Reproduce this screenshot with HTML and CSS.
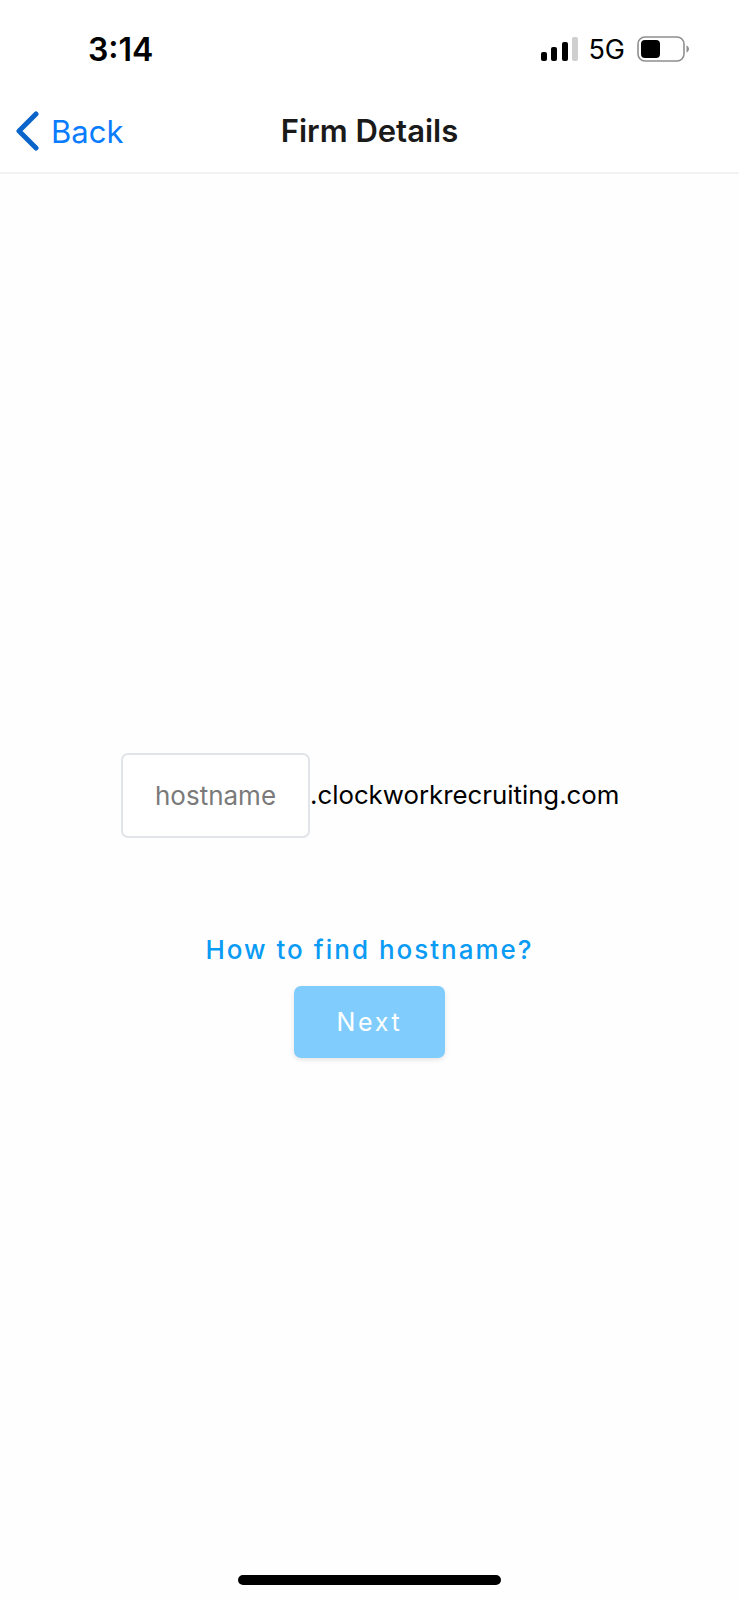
FILE: index.html
```html
<!DOCTYPE html>
<html lang="en">
<head>
    <meta charset="UTF-8">
    <meta name="viewport" content="width=device-width, initial-scale=1.0">
    <title>Firm Details</title>
    <link rel="stylesheet" href="styles.css">
</head>
<body>
    <div class="status-bar">
        <span class="clock">3:14</span>
        <div class="status-icons">
            <svg class="signal" width="37" height="24" viewBox="0 0 37 24">
                <rect x="0" y="15" width="6" height="9" rx="2" fill="#000"/>
                <rect x="10" y="10" width="6" height="14" rx="2" fill="#000"/>
                <rect x="21" y="5" width="6" height="19" rx="2" fill="#000"/>
                <rect x="31" y="0" width="6" height="24" rx="2" fill="#cfcfcf"/>
            </svg>
            <span class="network">5G</span>
            <svg class="battery" width="52" height="26" viewBox="0 0 52 26">
                <rect x="1" y="1" width="46" height="24" rx="7" fill="none" stroke="#8e8e8e" stroke-width="1.6"/>
                <rect x="4" y="4" width="19" height="18" rx="4" fill="#000"/>
                <path d="M49.5 9.5c1.5 .6 2.5 2 2.5 3.500s-1 2.900-2.500 3.500z" fill="#8e8e8e"/>
            </svg>
        </div>
    </div>

    <div class="nav-bar">
        <a class="back" href="#">
            <svg width="24" height="40" viewBox="0 0 24 40">
                <path d="M21 3 L4 20 L21 37" fill="none" stroke="#0a64c9" stroke-width="5" stroke-linecap="round" stroke-linejoin="round"/>
            </svg>
            <span>Back</span>
        </a>
        <h1>Firm Details</h1>
    </div>

    <div class="content">
        <div class="host-row">
            <input class="host-input" type="text" placeholder="hostname">
            <span class="domain">.clockworkrecruiting.com</span>
        </div>
        <a class="help-link" href="#">How to find hostname?</a>
        <button class="next-btn">Next</button>
    </div>

    <div class="home-bar"></div>
</body>
</html>
```

FILE: styles.css
```css
* {
    box-sizing: border-box;
}

body {
    font-family: Inter, "Liberation Sans", sans-serif;
    background-color: #fefefe;
    color: #000;
    margin: 0;
    height: 1600px;
    display: flex;
    flex-direction: column;
    overflow: hidden;
}

.status-bar {
    background-color: #fff;
    height: 92px;
    padding: 6px 50px 0 88px;
    display: flex;
    align-items: center;
    justify-content: space-between;
}

.clock {
    font-size: 32px;
    font-weight: 600;
}

.status-icons {
    display: flex;
    align-items: center;
    gap: 11px;
}

.signal {
    margin-right: -1px;
}

.network {
    font-size: 27px;
}

.battery {
    margin-left: 1px;
}

.nav-bar {
    background-color: #fff;
    height: 82px;
    border-bottom: 2px solid #f2f2f2;
    position: relative;
    display: flex;
    align-items: center;
    justify-content: center;
}

.nav-bar h1 {
    margin: 0 0 4px;
    font-size: 31px;
    font-weight: 600;
    color: #1a1a1a;
}

.back {
    position: absolute;
    left: 15px;
    top: 19px;
    display: flex;
    align-items: center;
    gap: 12px;
    color: #0a7cff;
    font-size: 31px;
    text-decoration: none;
}

.content {
    flex: 1;
    padding-top: 579px;
    display: flex;
    flex-direction: column;
    align-items: center;
}

.host-row {
    display: flex;
    align-items: center;
    width: 100%;
    padding-left: 121px;
}

.host-input {
    width: 189px;
    height: 85px;
    border: 2px solid #e1e4e8;
    border-radius: 7px;
    background-color: #fff;
    font-family: inherit;
    font-size: 26px;
    text-align: center;
    padding: 0;
    outline: none;
}

.host-input::placeholder {
    color: #7a7a7a;
    opacity: 1;
}

.domain {
    font-size: 25.800px;
    margin-bottom: 2px;
}

.help-link {
    margin-top: 96px;
    color: #0a9bf5;
    font-size: 26px;
    font-weight: 500;
    letter-spacing: 2px;
    text-decoration: none;
}

.next-btn {
    margin-top: 21px;
    width: 151px;
    height: 72px;
    border: none;
    border-radius: 7px;
    background-color: #80cdfd;
    color: #fff;
    font-family: inherit;
    font-size: 25px;
    font-weight: 400;
    letter-spacing: 2.700px;
    box-shadow: 0 2px 5px rgba(0, 0, 0, 0.1);
}

.home-bar {
    position: absolute;
    left: 238px;
    top: 1575px;
    width: 263px;
    height: 10px;
    border-radius: 5px;
    background-color: #000;
}
```
